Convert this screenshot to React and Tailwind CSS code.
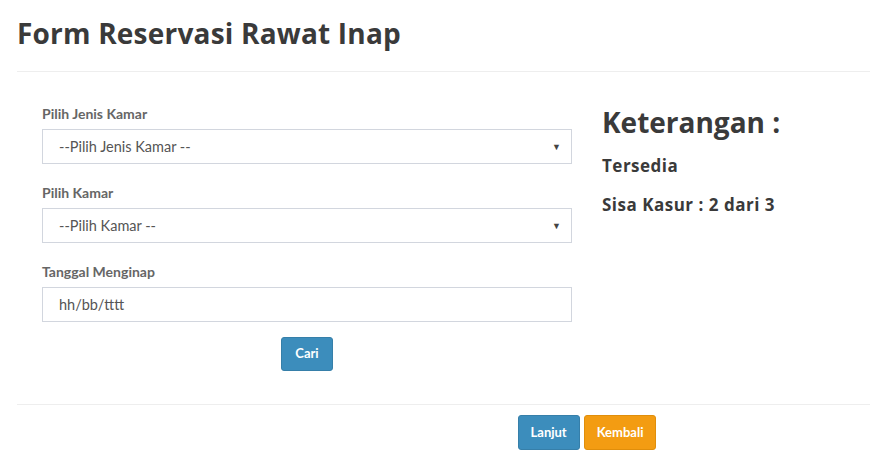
import React from "react";

const labelCls = "block text-[14px] leading-[20px] font-bold text-[#666] mb-[5px]";
const fieldCls =
  "h-[35px] w-full border border-[#d2d6de] bg-white px-[16px] text-[14.5px] text-[#555] flex items-center";

const Field = ({ label, children, arrow }) => (
  <div className="mb-[19px]">
    <label className={labelCls}>{label}</label>
    <div className={`${fieldCls} justify-between`}>
      <span>{children}</span>
      {arrow && <span className="text-[9px] text-[#444] mr-[-6px]">▼</span>}
    </div>
  </div>
);

export default function App() {
  return (
    <div
      className="w-[870px] h-[468px] overflow-hidden bg-white text-[#333]"
      style={{ fontFamily: "Lato, 'Open Sans', sans-serif" }}
    >
      <div className="w-[1140px] ml-[17px]">
        <h1
          className="pt-[16px] pb-[20px] text-[28px] leading-[35px] font-bold tracking-[0.2px] text-[#3a3a3a]"
          style={{ fontFamily: "'Open Sans', sans-serif" }}
        >
          Form Reservasi Rawat Inap
        </h1>
        <div className="border-t border-[#eee]" />

        <div className="grid grid-cols-2 pt-[32px] pb-[33px]">
          <div className="px-[15px]">
            <div className="pl-[10px]">
              <Field label="Pilih Jenis Kamar" arrow>
                --Pilih Jenis Kamar --
              </Field>
              <Field label="Pilih Kamar" arrow>
                --Pilih Kamar --
              </Field>
              <Field label="Tanggal Menginap">hh/bb/tttt</Field>
              <div className="flex justify-center -mt-[4px]">
                <button className="h-[34px] px-[13px] rounded-[3px] bg-[#3c8dbc] border border-[#367fa9] text-white text-[13px] font-bold">
                  Cari
                </button>
              </div>
            </div>
          </div>
          <div className="px-[15px]" style={{ fontFamily: "'Open Sans', sans-serif" }}>
            <h2 className="text-[28px] leading-[36px] font-bold text-[#3a3a3a]">
              Keterangan :
            </h2>
            <p className="mt-[14px] text-[17px] leading-[24px] font-bold tracking-[0.5px] text-[#3a3a3a]">Tersedia</p>
            <p className="mt-[15px] text-[17px] leading-[24px] font-bold tracking-[0.5px] text-[#3a3a3a]">
              Sisa Kasur : 2 dari 3
            </p>
          </div>
        </div>

        <div className="border-t border-[#eee] pt-[10px] flex justify-center gap-[4px]">
          <button className="h-[35px] px-[12px] rounded-[3px] bg-[#3c8dbc] border border-[#367fa9] text-white text-[13px] font-bold">
            Lanjut
          </button>
          <button className="h-[35px] px-[12px] rounded-[3px] bg-[#f39c12] border border-[#e08e0b] text-white text-[13px] font-bold">
            Kembali
          </button>
        </div>
      </div>
    </div>
  );
}
